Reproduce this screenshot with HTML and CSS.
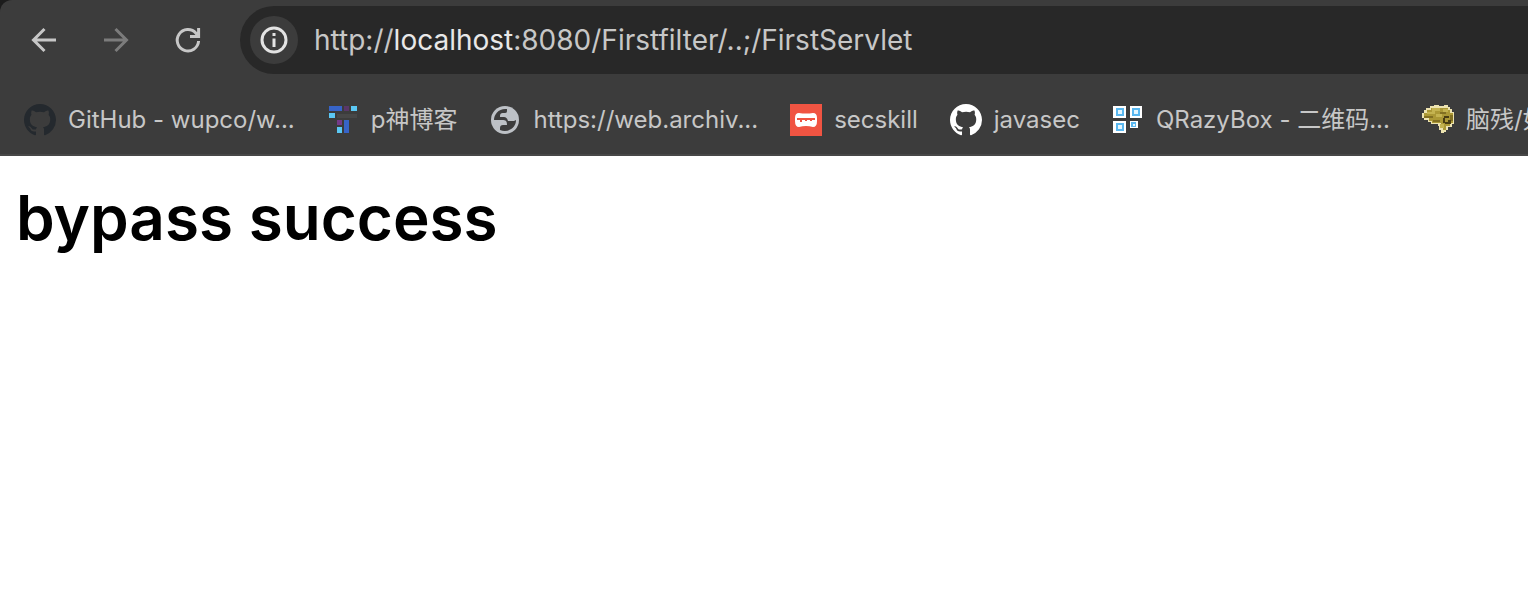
FILE: index.html
```html
<!DOCTYPE html>
<html lang="en">
<head>
<meta charset="utf-8">
<title>bypass success</title>
<link rel="stylesheet" href="styles.css">
</head>
<body>
<header class="browser">
  <div class="toolbar">
    <button class="nav" type="button" aria-label="Back"><svg viewBox="0 0 32 32"><path d="M28 16H6M16.500 5 5.500 16l11 11"/></svg></button>
    <button class="nav nav-off" type="button" aria-label="Forward" disabled><svg viewBox="0 0 32 32"><path d="M4 16h22M15.500 5l11 11-11 11"/></svg></button>
    <button class="nav" type="button" aria-label="Reload"><svg viewBox="0 0 32 32"><path d="M26.600 17A10.700 10.700 0 1 1 24 9.200l2 2.500M26.600 4v8.600H18"/></svg></button>
    <div class="address">
      <button class="site-info" type="button" aria-label="Site information"><svg viewBox="0 0 32 32"><circle cx="16" cy="16" r="12"/><path d="M16 14.500V23M16 9v3"/></svg></button>
      <div class="url" role="textbox" contenteditable="true" spellcheck="false" aria-label="Address">http://<span class="host">localhost</span>:8080/Firstfilter/..;/FirstServlet</div>
    </div>
  </div>
  <nav class="bookmarks" aria-label="Bookmarks">
    <a class="bookmark" href="#"><svg class="favicon" viewBox="0 0 16 16"><path fill="#24292e" d="M8 0C3.580 0 0 3.580 0 8c0 3.540 2.290 6.530 5.470 7.590.4.070.55-.17.55-.38 0-.19-.01-.82-.01-1.490-2.010.37-2.530-.49-2.690-.94-.09-.23-.48-.94-.82-1.130-.28-.15-.68-.52-.01-.53.63-.01 1.080.58 1.230.82.72 1.210 1.870.87 2.330.66.070-.52.28-.87.51-1.070-1.780-.2-3.640-.89-3.640-3.950 0-.87.31-1.590.82-2.150-.08-.2-.36-1.020.08-2.120 0 0 .67-.21 2.200.82.64-.18 1.320-.27 2-.27s1.360.09 2 .27c1.530-1.040 2.200-.82 2.200-.82.44 1.100.16 1.920.08 2.120.51.56.82 1.270.82 2.150 0 3.070-1.870 3.750-3.650 3.950.29.25.54.73.54 1.480 0 1.070-.01 1.930-.01 2.200 0 .21.15.46.55.38A8.010 8.010 0 0 0 16 8c0-4.420-3.580-8-8-8z"/></svg><span>GitHub - wupco/w...</span></a>
    <a class="bookmark" href="#"><svg class="favicon" viewBox="0 0 32 32"><path fill="#3764c8" d="M2 2h13v5H2zM17 16h5v13h-5z"/><path fill="#5bc8f4" d="M24 2h6v5h-6zM2 9h6v5H2zM10 23h5v6h-5z"/><path fill="#5a3768" d="M17 2h5v5h-5z"/><path fill="#743a88" d="M10 16h5v5h-5z"/><path fill="#474747" d="M10 10h20v4H10z"/></svg><span>p神博客</span></a>
    <a class="bookmark" href="#"><svg class="favicon" viewBox="0 0 32 32"><circle cx="16" cy="16" r="14" fill="#bdc1c6"/><path fill="#3c3c3c" d="M18 5C10 4 5 10 5 16h8c4 0 5 1 5 5h-4c-2 0-3 1-3 3v2c8 3 16-2 16-10l-2 1h-6c-1-3-2-4-4-4h-4c0-4 1-4 5-4 2 0 2-1 2-4z"/></svg><span>https://web.archiv...</span></a>
    <a class="bookmark" href="#"><svg class="favicon" viewBox="0 0 32 32"><path fill="#f05442" d="M0 0h32v32H0z"/><path fill="#fff" d="M9 9q7 1 14 0 4 0 4 5v3q0 6-4 6-7-2-14 0-4 0-4-6v-3q0-5 4-5z"/><path fill="#f05442" d="M7 14h18v2h-3v1h-2v-1h-3v1h-2v-1h-3v2h-2v-2H7z"/></svg><span>secskill</span></a>
    <a class="bookmark" href="#"><svg class="favicon" viewBox="0 0 16 16"><path fill="#fff" d="M8 0C3.580 0 0 3.580 0 8c0 3.540 2.290 6.530 5.470 7.590.4.070.55-.17.55-.38 0-.19-.01-.82-.01-1.490-2.010.37-2.530-.49-2.690-.94-.09-.23-.48-.94-.82-1.130-.28-.15-.68-.52-.01-.53.63-.01 1.080.58 1.230.82.72 1.210 1.870.87 2.330.66.070-.52.28-.87.51-1.070-1.780-.2-3.640-.89-3.640-3.950 0-.87.31-1.590.82-2.150-.08-.2-.36-1.020.08-2.120 0 0 .67-.21 2.200.82.64-.18 1.320-.27 2-.27s1.360.09 2 .27c1.530-1.040 2.200-.82 2.200-.82.44 1.100.16 1.920.08 2.120.51.56.82 1.270.82 2.150 0 3.070-1.870 3.750-3.650 3.950.29.25.54.73.54 1.480 0 1.070-.01 1.930-.01 2.200 0 .21.15.46.55.38A8.010 8.010 0 0 0 16 8c0-4.420-3.580-8-8-8z"/></svg><span>javasec</span></a>
    <a class="bookmark" href="#"><svg class="favicon" viewBox="0 0 32 32"><path fill="#fff" d="M1 2h13v12H1zM18 2h12v12H18zM1 17h13v12H1zM18 17h8v7h-8z"/><path fill="#5ab8f0" d="M4 4h8v8H4zM20 4h8v8h-8zM4 19h8v8H4zM19 18h5v5h-5z"/><path fill="#e4f6ff" d="M6 6h4v4H6zM22 6h4v4h-4zM6 21h4v4H6zM21 20h2v2h-2z"/></svg><span>QRazyBox - 二维码...</span></a>
    <a class="bookmark" href="#"><svg class="favicon" viewBox="0 0 32 32" shape-rendering="crispEdges"><path fill="#ede3b0" d="M8 2h4V1h5v1h5v-1h4v2h2v2h2v3h2v12h-2v3h-4v3h-2v2h-2v1h-3v-3h-2v-4h-1v-2H9v-2H6v-2H2v-2H0V9h2V6h2V4h4z"/><path fill="#ab9835" d="M9 4h17v2h2v3h3v10h-3v3h-4v4h-3v-5h-2v-2h-9v-2H7v-3H2V9h3V6h4z"/><path fill="#c4b350" d="M10 4h8v3h-5v3H5V8h5zM21 5h5v3h-5zM14 10h6v3h-6zM18 20h4v4h-4z"/><path fill="#827022" d="M2 12h9v2H2zM18 8h6v2h-6zM11 16h7v2h-7zM28 11h3v6h-3z"/><path fill="#493d12" d="M22 12h5v2h-5zM21 14h2v5h-2zM26 16h3v4h-6v-2h3z"/></svg><span>脑残/如</span></a>
  </nav>
</header>
<main class="page">
  <h1 class="title">bypass success</h1>
</main>
</body>
</html>
```
FILE: styles.css
```css
* { box-sizing: border-box; }
body {
  display: flex;
  flex-direction: column;
  min-height: 100vh;
  margin: 0;
  background: #1c1c1c;
  color: #000;
  font-family: Inter, "Noto Sans CJK SC", sans-serif;
}
button { padding: 0; border: 0; background: none; }
.browser {
  background: #3c3c3c;
  border-bottom: 2px solid #474747;
  border-top-left-radius: 12px;
  overflow: hidden;
}
.toolbar {
  display: flex;
  align-items: center;
  padding: 6px 0 6px 28px;
  gap: 40px;
}
.nav {
  display: flex;
  flex: none;
  color: #c7c7c7;
}
.nav-off { color: #7c7c7c; }
.nav svg,
.site-info svg {
  width: 32px;
  height: 32px;
  fill: none;
  stroke: currentColor;
  stroke-width: 3;
}
.address {
  display: flex;
  flex: 1;
  align-items: center;
  gap: 16px;
  margin-left: -4px;
  padding: 10px;
  background: #282828;
  border-radius: 34px 0 0 34px;
}
.site-info {
  display: flex;
  align-items: center;
  justify-content: center;
  width: 48px;
  height: 48px;
  border-radius: 50%;
  background: #3c3c3c;
  color: #e3e3e3;
}
.url {
  flex: 1;
  outline: none;
  color: #c7c7c7;
  font-size: 28px;
  line-height: 36px;
  white-space: nowrap;
}
.host { color: #e8e8e8; }
.bookmarks {
  display: flex;
  gap: 32px;
  padding: 22px 0 16px 24px;
  overflow: hidden;
}
.bookmark {
  display: flex;
  flex: none;
  align-items: center;
  gap: 12px;
  color: #c7c7c7;
  font-size: 24px;
  line-height: 36px;
  text-decoration: none;
  white-space: nowrap;
}
.favicon { width: 32px; height: 32px; }
.page {
  flex: 1;
  padding: 24px 16px;
  background: #fff;
}
.title {
  margin: 0;
  font-size: 62px;
  font-weight: 600;
  line-height: 76px;
}
```
